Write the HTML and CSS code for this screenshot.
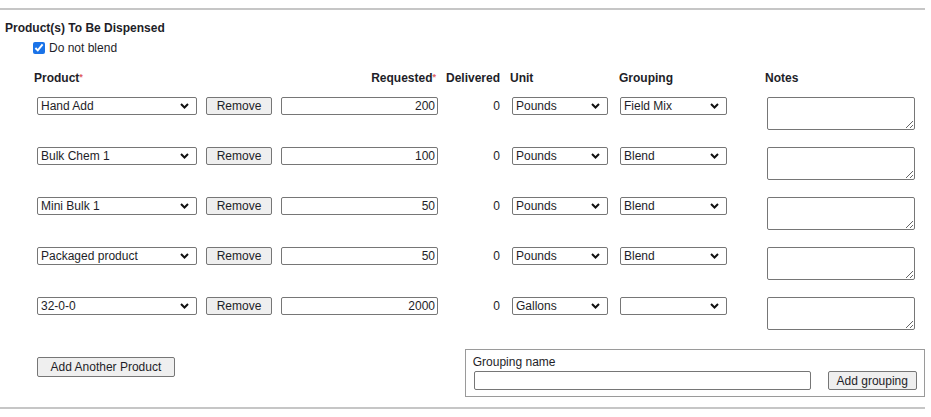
FILE: index.html
```html
<!DOCTYPE html>
<html>
<head>
<meta charset="utf-8">
<link rel="stylesheet" href="styles.css">
</head>
<body>
<div class="page">
  <hr class="rule">
  <h3 class="title">Product(s) To Be Dispensed</h3>
  <label class="blend"><input type="checkbox" class="cb" checked><span>Do not blend</span></label>

  <div class="grid">
    <div class="hd c1">Product<span class="req">*</span></div>
    <div class="hd c2">Requested<span class="req">*</span></div>
    <div class="hd c3">Delivered</div>
    <div class="hd c4">Unit</div>
    <div class="hd c5">Grouping</div>
    <div class="hd c6">Notes</div>

    <div class="cell c1"><select class="sel prod"><option>Hand Add</option></select><button class="btn rm">Remove</button></div>
    <div class="cell c2"><input class="num" value="200"></div>
    <div class="cell c3"><span class="dv">0</span></div>
    <div class="cell c4"><select class="sel unit"><option>Pounds</option></select></div>
    <div class="cell c5"><select class="sel grp"><option>Field Mix</option></select></div>
    <div class="cell c6"><textarea class="notes"></textarea></div>

    <div class="cell c1"><select class="sel prod"><option>Bulk Chem 1</option></select><button class="btn rm">Remove</button></div>
    <div class="cell c2"><input class="num" value="100"></div>
    <div class="cell c3"><span class="dv">0</span></div>
    <div class="cell c4"><select class="sel unit"><option>Pounds</option></select></div>
    <div class="cell c5"><select class="sel grp"><option>Blend</option></select></div>
    <div class="cell c6"><textarea class="notes"></textarea></div>

    <div class="cell c1"><select class="sel prod"><option>Mini Bulk 1</option></select><button class="btn rm">Remove</button></div>
    <div class="cell c2"><input class="num" value="50"></div>
    <div class="cell c3"><span class="dv">0</span></div>
    <div class="cell c4"><select class="sel unit"><option>Pounds</option></select></div>
    <div class="cell c5"><select class="sel grp"><option>Blend</option></select></div>
    <div class="cell c6"><textarea class="notes"></textarea></div>

    <div class="cell c1"><select class="sel prod"><option>Packaged product</option></select><button class="btn rm">Remove</button></div>
    <div class="cell c2"><input class="num" value="50"></div>
    <div class="cell c3"><span class="dv">0</span></div>
    <div class="cell c4"><select class="sel unit"><option>Pounds</option></select></div>
    <div class="cell c5"><select class="sel grp"><option>Blend</option></select></div>
    <div class="cell c6"><textarea class="notes"></textarea></div>

    <div class="cell c1"><select class="sel prod"><option>32-0-0</option></select><button class="btn rm">Remove</button></div>
    <div class="cell c2"><input class="num" value="2000"></div>
    <div class="cell c3"><span class="dv">0</span></div>
    <div class="cell c4"><select class="sel unit"><option>Gallons</option></select></div>
    <div class="cell c5"><select class="sel grp"><option></option></select></div>
    <div class="cell c6"><textarea class="notes"></textarea></div>
  </div>

  <div class="footer">
    <button class="btn add">Add Another Product</button>
    <fieldset class="groupbox">
      <div class="gname">Grouping name</div>
      <div class="grow">
        <input class="gin">
        <button class="btn addg">Add grouping</button>
      </div>
    </fieldset>
  </div>
  <hr class="rule bottom">
</div>
</body>
</html>
```

FILE: styles.css
```css
* { box-sizing: border-box; }
html, body { margin: 0; padding: 0; background: #fff; }
body {
  font-family: "Liberation Sans", Arial, sans-serif;
  font-size: 12px;
  color: #1e1e28;
  width: 931px;
  height: 417px;
  overflow: hidden;
}
.page { padding: 8px 6px 0 0; }
.rule {
  margin: 0;
  border: 0;
  border-top: 2px solid #c6c6c6;
  height: 0;
}
.title {
  margin: 11px 0 0 5px;
  font-size: 12px;
  font-weight: bold;
  line-height: 14px;
  color: #1e1e28;
}
.blend {
  display: flex;
  align-items: center;
  margin: 6px 0 0 32px;
  height: 14px;
}
.cb {
  margin: 0 4px 0 1px;
  width: 12px;
  height: 12px;
  accent-color: #1a73e8;
}
.grid {
  display: grid;
  grid-template-columns: 247px 157px 72px 109px 146px 155px;
  grid-auto-rows: 50px;
  grid-template-rows: 26px;
  margin: 16px 0 0 34px;
}
.hd {
  font-weight: bold;
  line-height: 14px;
  color: #1e1e28;
}
.hd.c2 { text-align: right; padding-right: 2px; }
.hd.c3 { text-align: right; padding-right: 10px; }
.req { color: #e06060; font-size: 9px; vertical-align: top; position: relative; top: -1px; }
.cell { display: flex; align-items: flex-start; }
.sel {
  appearance: none;
  -webkit-appearance: none;
  height: 18px;
  border: 1px solid #767676;
  border-radius: 2px;
  background: #fff url("data:image/svg+xml;utf8,<svg xmlns='http://www.w3.org/2000/svg' width='9' height='6' viewBox='0 0 9 6'><path d='M1 1 L4.5 4.5 L8 1' fill='none' stroke='%23111' stroke-width='2'/></svg>") no-repeat right 7px center;
  font-family: "Liberation Sans", Arial, sans-serif;
  font-size: 12px;
  color: #1e1e28;
  padding: 0 18px 0 3px;
  margin: 0;
  line-height: 16px;
}
.prod { width: 160px; margin-left: 3px; }
.unit { width: 96px; margin-left: 2px; }
.grp { width: 107px; margin-left: 1px; }
.btn {
  font-family: "Liberation Sans", Arial, sans-serif;
  font-size: 12px;
  color: #1e1e28;
  background: #efefef;
  border: 1px solid #767676;
  border-radius: 2px;
  padding: 0;
  margin: 0;
}
.rm { width: 66px; height: 18px; margin-left: 9px; }
.num {
  width: 157px;
  height: 18px;
  border: 1px solid #767676;
  border-radius: 2px;
  text-align: right;
  font-family: "Liberation Sans", Arial, sans-serif;
  font-size: 12px;
  color: #1e1e28;
  padding: 0 2px;
  margin: 0;
}
.c3.cell { justify-content: flex-end; padding-right: 10px; }
.dv { line-height: 18px; }
.notes {
  width: 148px;
  height: 33px;
  margin: 0 0 0 2px;
  border: 1px solid #767676;
  border-radius: 2px;
  resize: both;
  font-family: "Liberation Mono", monospace;
  font-size: 12px;
}
.footer {
  display: flex;
  align-items: flex-start;
  margin-top: 2px;
  height: 58px;
}
.add {
  width: 138px;
  height: 20px;
  margin: 8px 0 0 37px;
}
.groupbox {
  margin: 0 0 0 290px;
  width: 461px;
  height: 48px;
  border: 1px solid #9a9a9a;
  padding: 5px 0 0 7px;
}
.gname { line-height: 14px; color: #1e1e28; }
.grow { display: flex; align-items: center; margin-top: 2px; }
.gin {
  width: 337px;
  height: 19px;
  border: 1px solid #767676;
  border-radius: 2px;
  margin: 0 0 0 1px;
  padding: 0;
}
.addg {
  width: 89px;
  height: 19px;
  margin-left: 17px;
}
.bottom { margin-top: 0; }
```
